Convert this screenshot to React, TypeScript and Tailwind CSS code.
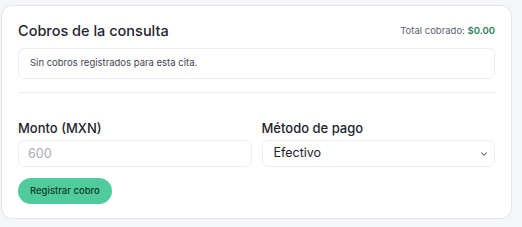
import { ChevronDown } from "lucide-react";

export default function App() {
  return (
    <div className="min-h-[227px] w-[522px] bg-[#f5f6f8] pl-[1px] pt-[5px] font-['Inter',sans-serif]">
      <div className="h-[214px] w-[511px] rounded-[11px] border border-[#e3e5ea] bg-white px-4 pt-[14px]">
        <div className="flex items-center justify-between">
          <h2 className="text-[14.5px] font-medium text-[#1f2430]">Cobros de la consulta</h2>
          <div className="text-[9.5px] text-[#5b6270]">
            Total cobrado: <span className="font-semibold text-[#2f7d5b]">$0.00</span>
          </div>
        </div>

        <div className="mt-[6px] flex h-[31px] items-center rounded-md border border-[#eceef2] px-[11px] text-[9.5px] text-[#3f4552]">
          Sin cobros registrados para esta cita.
        </div>

        <div className="mt-[13px] border-t border-[#eceef2]" />

        <div className="mt-[26px] grid grid-cols-2 gap-[10px]">
          <div>
            <label className="block text-[13px] font-medium text-[#1f2430]">Monto (MXN)</label>
            <input
              placeholder="600"
              className="mt-[2px] h-[27px] w-full rounded-md border border-[#eceef2] px-[9px] text-[12.5px] placeholder:text-[#a6abb5] outline-none"
            />
          </div>
          <div>
            <label className="block text-[13px] font-medium text-[#1f2430]">Método de pago</label>
            <div className="mt-[2px] flex h-[27px] w-full items-center justify-between rounded-md border border-[#eceef2] pl-[11px] pr-[5px] text-[12.5px] text-[#1f2430]">
              <span>Efectivo</span>
              <ChevronDown size={10} strokeWidth={2.5} className="text-[#555b66]" />
            </div>
          </div>
        </div>

        <button className="mt-[11px] h-[26px] rounded-full bg-[#4fcb9c] px-[12px] text-[9.5px] font-medium text-[#123a2a]">
          Registrar cobro
        </button>
      </div>
    </div>
  );
}
